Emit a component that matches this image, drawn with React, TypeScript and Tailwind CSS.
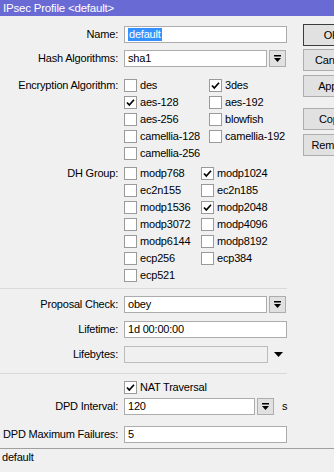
import React from "react";

const font = { fontFamily: '"Liberation Sans", Arial, sans-serif' };

function DropIcon() {
  return (
    <svg width="7" height="8" viewBox="0 0 7 8">
      <rect x="0" y="0" width="7" height="1.5" fill="#000" />
      <polygon points="0,3 7,3 3.5,7" fill="#000" />
    </svg>
  );
}

function DropBtn() {
  return (
    <div className="w-[17px] h-[17px] border border-[#adadad] bg-[#e1e1e1] flex items-center justify-center shrink-0">
      <DropIcon />
    </div>
  );
}

function Check({ checked, label }: { checked?: boolean; label: string }) {
  return (
    <div className="flex items-center h-[17px] whitespace-nowrap">
      <div className="w-[13px] h-[13px] border border-[#9a9a9a] bg-white shrink-0 flex items-center justify-center">
        {checked && (
          <svg width="11" height="11" viewBox="0 0 11 11">
            <polyline points="2,5.5 4.3,8 9,2.8" fill="none" stroke="#000" strokeWidth="1.7" />
          </svg>
        )}
      </div>
      <span className="ml-[3px]">{label}</span>
    </div>
  );
}

function Label({ children }: { children: React.ReactNode }) {
  return <div className="w-[118px] shrink-0 text-right leading-[17px] whitespace-nowrap">{children}</div>;
}

function Input({ children, className = "" }: { children?: React.ReactNode; className?: string }) {
  return (
    <div className={"h-[17px] border border-[#acacac] bg-white pl-[3px] leading-[15px] whitespace-nowrap " + className}>
      {children}
    </div>
  );
}

function Btn({ children, def }: { children: React.ReactNode; def?: boolean }) {
  return (
    <div
      className={
        "w-[57px] h-[22px] shrink-0 border bg-[#e1e1e1] flex items-center justify-center " +
        (def ? "border-[#3c3c3c]" : "border-[#adadad]")
      }
    >
      {children}
    </div>
  );
}

export default function App() {
  return (
    <div
      className="w-[334px] h-[472px] overflow-hidden bg-[#f0f0f0] flex flex-col text-[11px] text-black tracking-[-0.2px]"
      style={font}
    >
      <div className="h-[16px] bg-[#6a6ad4] text-white pl-[3px] leading-[16px] text-[11.5px] shrink-0">
        IPsec Profile &lt;default&gt;
      </div>
      <div className="flex flex-1 min-h-0">
        <div className="w-[288px] shrink-0 flex flex-col pt-[10px]">
          <div className="flex items-center">
            <Label>Name:</Label>
            <Input className="ml-[6px] w-[163px] pl-[2px]">
              <span className="bg-[#3392ff] text-white px-[1px] leading-[13px] inline-block">default</span>
            </Input>
          </div>
          <div className="flex items-center mt-[7px]">
            <Label>Hash Algorithms:</Label>
            <Input className="ml-[6px] w-[143px]">sha1</Input>
            <div className="ml-[2px]">
              <DropBtn />
            </div>
          </div>
          <div className="flex mt-[10px]">
            <Label>Encryption Algorithm:</Label>
            <div className="ml-[6px] grid grid-cols-[85px_auto]">
              <Check label="des" />
              <Check checked label="3des" />
              <Check checked label="aes-128" />
              <Check label="aes-192" />
              <Check label="aes-256" />
              <Check label="blowfish" />
              <Check label="camellia-128" />
              <Check label="camellia-192" />
              <Check label="camellia-256" />
            </div>
          </div>
          <div className="flex mt-[3px]">
            <Label>DH Group:</Label>
            <div className="ml-[6px] grid grid-cols-[77px_auto]">
              <Check label="modp768" />
              <Check checked label="modp1024" />
              <Check label="ec2n155" />
              <Check label="ec2n185" />
              <Check label="modp1536" />
              <Check checked label="modp2048" />
              <Check label="modp3072" />
              <Check label="modp4096" />
              <Check label="modp6144" />
              <Check label="modp8192" />
              <Check label="ecp256" />
              <Check label="ecp384" />
              <Check label="ecp521" />
            </div>
          </div>
          <div className="h-px bg-[#d9d9d9] mt-[4px] w-[287px]" />
          <div className="flex items-center mt-[7px]">
            <Label>Proposal Check:</Label>
            <Input className="ml-[6px] w-[143px]">obey</Input>
            <div className="ml-[2px]">
              <DropBtn />
            </div>
          </div>
          <div className="flex items-center mt-[8px]">
            <Label>Lifetime:</Label>
            <Input className="ml-[6px] w-[163px]">1d 00:00:00</Input>
          </div>
          <div className="flex items-center mt-[8px]">
            <Label>Lifebytes:</Label>
            <div className="ml-[6px] w-[144px] h-[17px] border border-[#bcbcbc] bg-[#f0f0f0]" />
            <div className="ml-[6px] flex items-center">
              <svg width="9" height="6" viewBox="0 0 9 6">
                <polygon points="0,0 9,0 4.5,5" fill="#000" />
              </svg>
            </div>
          </div>
          <div className="h-px bg-[#d9d9d9] mt-[10px] w-[287px]" />
          <div className="flex items-center mt-[5px]">
            <div className="w-[124px] shrink-0" />
            <Check checked label="NAT Traversal" />
          </div>
          <div className="flex items-center mt-[2px]">
            <Label>DPD Interval:</Label>
            <Input className="ml-[6px] w-[131px]">120</Input>
            <div className="ml-[2px]">
              <DropBtn />
            </div>
            <span className="ml-[8px]">s</span>
          </div>
          <div className="flex items-center mt-[11px]">
            <Label>DPD Maximum Failures:</Label>
            <Input className="ml-[6px] w-[163px]">5</Input>
          </div>
        </div>
        <div className="ml-[15px] pt-[8px] flex flex-col shrink-0">
          <Btn def>OK</Btn>
          <div className="mt-[3px]">
            <Btn>Cancel</Btn>
          </div>
          <div className="mt-[4px]">
            <Btn>Apply</Btn>
          </div>
          <div className="mt-[11px]">
            <Btn>Copy</Btn>
          </div>
          <div className="mt-[4px]">
            <Btn>Remove</Btn>
          </div>
        </div>
      </div>
      <div className="h-[24px] shrink-0 border-t border-[#a0a0a0] pl-[2px] leading-[17px]">default</div>
    </div>
  );
}
